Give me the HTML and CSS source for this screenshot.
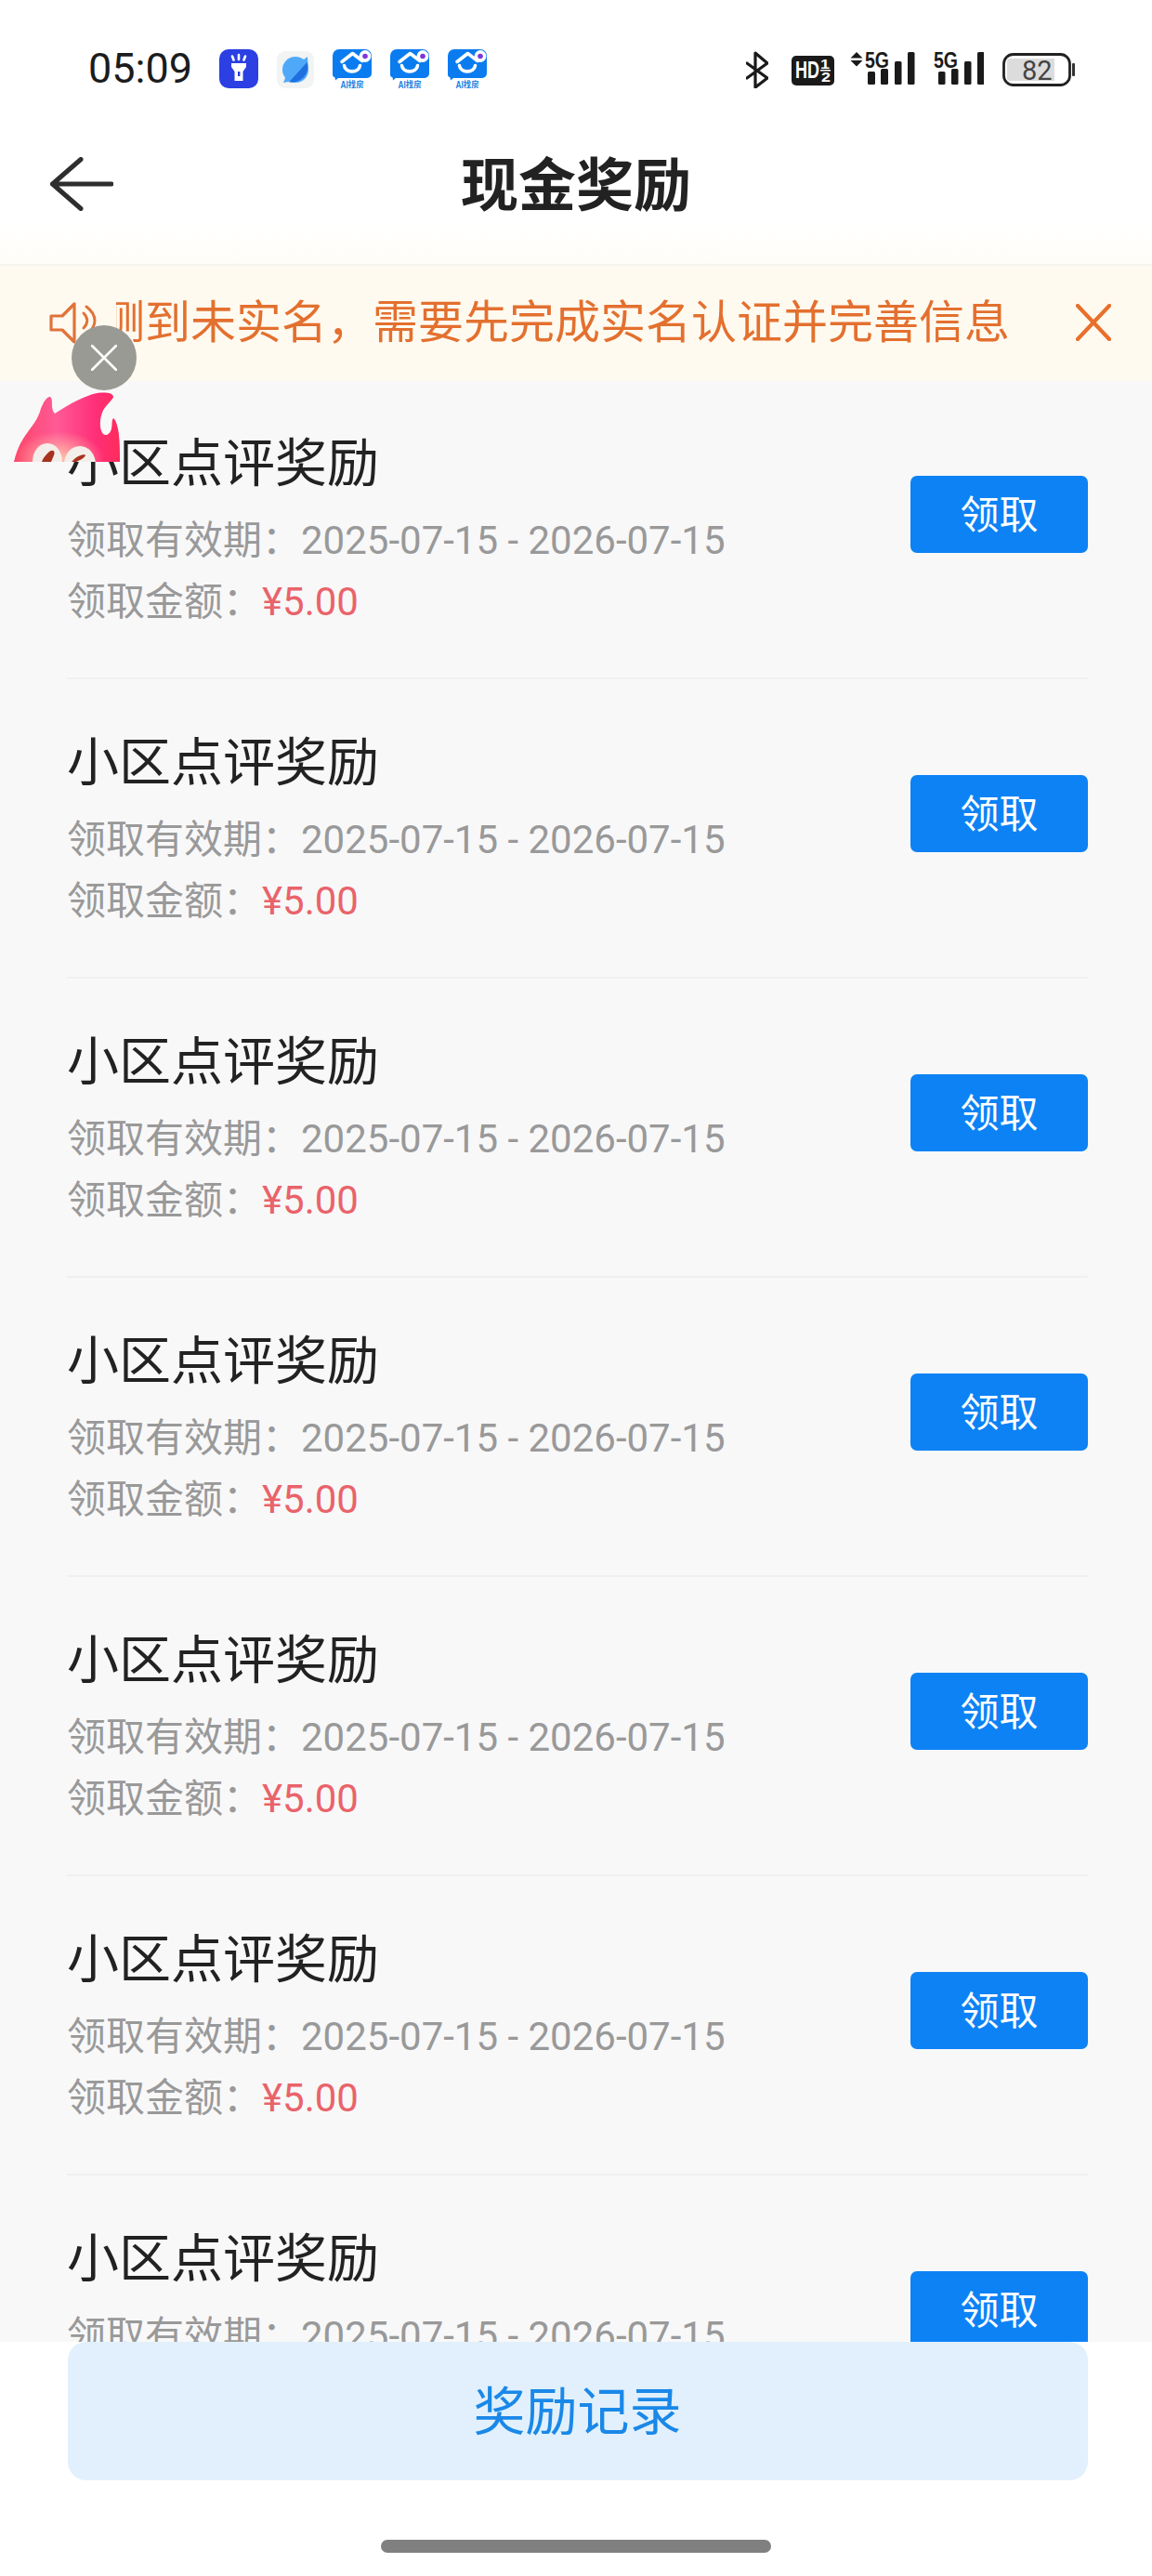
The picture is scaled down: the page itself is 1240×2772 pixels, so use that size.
FILE: index.html
```html
<!DOCTYPE html>
<html lang="zh-CN">
<head>
<meta charset="utf-8">
<title>现金奖励</title>
<link rel="stylesheet" href="styles.css">
</head>
<body>
<svg class="defs" width="0" height="0" aria-hidden="true">
  <symbol id="ai" viewBox="0 0 42 42">
    <path d="M7 0H35A7 7 0 0 1 42 7V26A5 5 0 0 1 37 31H6L3 33.5 2.6 30.5A4 4 0 0 1 0 26V7A7 7 0 0 1 7 0Z" fill="#0a7cf0"/>
    <path d="M10 13.5 21.5 4.5 32 12.5" fill="none" stroke="#fff" stroke-width="3.6" stroke-linecap="round" stroke-linejoin="round"/>
    <path d="M12.5 17.5C13.5 26 28.5 26 29.5 17.5" fill="none" stroke="#fff" stroke-width="3.6" stroke-linecap="round"/>
    <circle cx="35" cy="7.5" r="6.4" fill="#fff"/>
    <circle cx="35" cy="7.5" r="2.8" fill="#7c38d8"/>
    <text class="ai-label" x="21" y="41.5" text-anchor="middle" textLength="25" lengthAdjust="spacingAndGlyphs">AI找房</text>
  </symbol>
</svg>
<div class="page">
  <header class="status">
    <span class="time">05:09</span>
    <div class="apps">
      <svg class="app" viewBox="0 0 42 42">
        <rect width="42" height="42" rx="10" fill="#2b3fe3"/>
        <path d="M13 15H29V19L25.500 24V34H16.500V24L13 19Z" fill="#fff"/>
        <rect x="20" y="24" width="2.400" height="5" fill="#2b3fe3"/>
        <path d="M14 7.500 15.500 11.500M21 6V11M28 7.500 26.500 11.500" stroke="#fff" stroke-width="2.600" stroke-linecap="round"/>
      </svg>
      <svg class="app globe" viewBox="0 0 40 40">
        <rect width="40" height="40" rx="9" fill="#f2f3f3"/>
        <circle cx="20" cy="20" r="14" fill="#4fa9f8"/>
        <path d="M29 9 33 6 33.500 15 25 31 12 33 7 34 9 29Z" fill="#4fa9f8"/>
        <path d="M32.500 12C36 22 28 35 13 33.500Z" fill="#1f6fe0"/>
      </svg>
      <svg class="app"><use href="#ai"/></svg>
      <svg class="app"><use href="#ai"/></svg>
      <svg class="app"><use href="#ai"/></svg>
    </div>
    <div class="indicators">
      <svg class="ind bt" width="24" height="42" viewBox="0 0 24 42">
        <path d="M1 15 23 31 10 41V4L23 15 1 31" fill="none" stroke="#1a1a1a" stroke-width="3.200" stroke-linejoin="round" stroke-linecap="round"/>
      </svg>
      <svg class="ind hd" width="46" height="42" viewBox="0 0 46 42">
        <rect y="7" width="46" height="32" rx="5" fill="#1a1a1a"/>
        <text class="hd-text" x="4" y="31" textLength="26" lengthAdjust="spacingAndGlyphs">HD</text>
        <text class="hd-frac" x="31" y="21" textLength="10" lengthAdjust="spacingAndGlyphs">1</text>
        <rect x="31" y="22" width="11" height="1.500" fill="#fff"/>
        <text class="hd-frac" x="32" y="35" textLength="10" lengthAdjust="spacingAndGlyphs">2</text>
      </svg>
      <svg class="ind" width="70" height="42" viewBox="0 0 70 42">
        <path d="M7 3 13.500 9.500H0.500ZM0.500 12H13.500L7 18.500Z" fill="#1a1a1a"/>
        <text class="net" x="16" y="20" textLength="26" lengthAdjust="spacingAndGlyphs">5G</text>
        <rect x="19" y="24" width="8" height="14" rx="1.500" fill="#1a1a1a"/>
        <rect x="33" y="21" width="8" height="17" rx="1.500" fill="#1a1a1a"/>
        <rect x="48" y="13" width="7.500" height="25" rx="1.500" fill="#1a1a1a"/>
        <rect x="62" y="3" width="7.500" height="35" rx="1.500" fill="#1a1a1a"/>
      </svg>
      <svg class="ind" width="54" height="42" viewBox="0 0 54 42">
        <text class="net" x="0" y="20" textLength="26" lengthAdjust="spacingAndGlyphs">5G</text>
        <rect x="5" y="24" width="7.500" height="14" rx="1.500" fill="#1a1a1a"/>
        <rect x="19" y="21" width="7.500" height="17" rx="1.500" fill="#1a1a1a"/>
        <rect x="33" y="13" width="7.500" height="25" rx="1.500" fill="#1a1a1a"/>
        <rect x="47" y="3" width="7.500" height="35" rx="1.500" fill="#1a1a1a"/>
      </svg>
      <svg class="ind" width="79" height="42" viewBox="0 0 79 42">
        <rect x="1.500" y="5.500" width="71" height="33" rx="10" fill="none" stroke="#222" stroke-width="2.800"/>
        <path d="M8 10H56V34H8A3 3 0 0 1 5 31V13A3 3 0 0 1 8 10Z" fill="#dcdcdc"/>
        <text class="batt" x="21" y="33">82</text>
        <rect x="75" y="15" width="3" height="14" rx="1" fill="#333"/>
      </svg>
    </div>
  </header>

  <nav class="nav">
    <svg class="back" width="68" height="58" viewBox="0 0 68 58">
      <path d="M33 2.500 2.500 29 33 55.500M2.500 29H66" fill="none" stroke="#2e2e2e" stroke-width="5" stroke-linecap="round" stroke-linejoin="round"/>
    </svg>
    <h1 class="nav-title">现金奖励</h1>
  </nav>

  <div class="notice">
    <svg class="speaker" width="52" height="45" viewBox="0 0 52 45">
      <path d="M2 15H14L27 2V43L14 30H2Z" fill="none" stroke="#e0733a" stroke-width="3.200" stroke-linejoin="round"/>
      <path d="M40 5C52 14 52 26 40 35M37 12C42 17 42 23 37 28" fill="none" stroke="#e0733a" stroke-width="3" stroke-linecap="round"/>
    </svg>
    <div class="marquee"><span class="marquee-text">检测到未实名，需要先完成实名认证并完善信息</span></div>
    <svg class="notice-close" width="38" height="40" viewBox="0 0 38 40">
      <path d="M2 2 36 38M36 2 2 38" stroke="#e8702c" stroke-width="4.200" stroke-linecap="square"/>
    </svg>
  </div>

  <main class="list">
    <section class="row">
      <div class="info">
        <h2 class="title">小区点评奖励</h2>
        <p class="meta">领取有效期：2025-07-15 - 2026-07-15</p>
        <p class="meta">领取金额：<span class="money">¥5.00</span></p>
      </div>
      <button class="claim">领取</button>
    </section>
    <section class="row">
      <div class="info">
        <h2 class="title">小区点评奖励</h2>
        <p class="meta">领取有效期：2025-07-15 - 2026-07-15</p>
        <p class="meta">领取金额：<span class="money">¥5.00</span></p>
      </div>
      <button class="claim">领取</button>
    </section>
    <section class="row">
      <div class="info">
        <h2 class="title">小区点评奖励</h2>
        <p class="meta">领取有效期：2025-07-15 - 2026-07-15</p>
        <p class="meta">领取金额：<span class="money">¥5.00</span></p>
      </div>
      <button class="claim">领取</button>
    </section>
    <section class="row">
      <div class="info">
        <h2 class="title">小区点评奖励</h2>
        <p class="meta">领取有效期：2025-07-15 - 2026-07-15</p>
        <p class="meta">领取金额：<span class="money">¥5.00</span></p>
      </div>
      <button class="claim">领取</button>
    </section>
    <section class="row">
      <div class="info">
        <h2 class="title">小区点评奖励</h2>
        <p class="meta">领取有效期：2025-07-15 - 2026-07-15</p>
        <p class="meta">领取金额：<span class="money">¥5.00</span></p>
      </div>
      <button class="claim">领取</button>
    </section>
    <section class="row">
      <div class="info">
        <h2 class="title">小区点评奖励</h2>
        <p class="meta">领取有效期：2025-07-15 - 2026-07-15</p>
        <p class="meta">领取金额：<span class="money">¥5.00</span></p>
      </div>
      <button class="claim">领取</button>
    </section>
    <section class="row">
      <div class="info">
        <h2 class="title">小区点评奖励</h2>
        <p class="meta">领取有效期：2025-07-15 - 2026-07-15</p>
        <p class="meta">领取金额：<span class="money">¥5.00</span></p>
      </div>
      <button class="claim">领取</button>
    </section>
  </main>

  <footer class="footer">
    <button class="records">奖励记录</button>
    <div class="home-bar"></div>
  </footer>

  <div class="float-close">
    <svg width="28" height="28" viewBox="0 0 28 28">
      <path d="M1 1 27 27M27 1 1 27" stroke="#fff" stroke-width="2.600" stroke-linecap="round"/>
    </svg>
  </div>
  <svg class="flame" width="118" height="75" viewBox="0 0 118 75">
    <defs>
      <linearGradient id="flameFill" x1="0" y1="0" x2="1" y2="0">
        <stop offset="0" stop-color="#ff4468"/>
        <stop offset="0.4" stop-color="#ff5a96"/>
        <stop offset="0.75" stop-color="#ff2f78"/>
        <stop offset="1" stop-color="#ff2b58"/>
      </linearGradient>
      <radialGradient id="flameGlow" cx="0.5" cy="0.5" r="0.5">
        <stop offset="0" stop-color="#ffc4a8" stop-opacity="1"/>
        <stop offset="1" stop-color="#ffc4a8" stop-opacity="0"/>
      </radialGradient>
      <clipPath id="flameClip">
        <path d="M1 75C3 66 6 58 11 50 17 40 25 33 29 21 31 14 35 6 39 5 42 4 42 10 42 14 42 18 43 21 45 23 53 18 60 13 69 9 78 5 86 1 95 0.500 101 0 108 1 108 5 108 8 99 14 96 22 93 30 93 40 97 45 101 48 105 44 106 39 107 35 106 30 108 28 111 30 113 38 114 46 115 55 115 65 115 75Z"/>
      </clipPath>
    </defs>
    <g clip-path="url(#flameClip)">
      <rect width="118" height="75" fill="url(#flameFill)"/>
      <ellipse cx="50" cy="72" rx="48" ry="30" fill="url(#flameGlow)"/>
    </g>
    <ellipse cx="37" cy="75" rx="16" ry="20" fill="#f4eeea"/>
    <ellipse cx="72" cy="78" rx="17" ry="20" fill="#f4eeea"/>
    <path d="M38 65C42 61 46 63 44 68L41 75H31C32 71 35 68 38 65Z" fill="#a83220"/>
    <path d="M66 72C70 68 78 66 78 68 77 71 72 73 68 75H63Z" fill="#a83220"/>
  </svg>
</div>
</body>
</html>
```

FILE: styles.css
```css
* {
  box-sizing: border-box;
}

html,
body {
  margin: 0;
  padding: 0;
}

body {
  background: #fff;
  font-family: Roboto, "Noto Sans CJK SC", sans-serif;
}

.defs {
  position: absolute;
}

.page {
  position: relative;
  display: flex;
  flex-direction: column;
  width: 1240px;
  height: 2772px;
  overflow: hidden;
  background: #fff;
}

/* Status bar */
.status {
  display: flex;
  align-items: center;
  height: 128px;
  padding: 53px 82px 33px 95px;
  flex: none;
}

.time {
  width: 110px;
  margin-right: 31px;
  font-size: 45px;
  line-height: 42px;
  color: #1c1c1c;
  white-space: nowrap;
}

.apps {
  display: flex;
  gap: 20px;
}

.app {
  width: 42px;
  height: 42px;
  display: block;
}

.app.globe {
  width: 40px;
  height: 40px;
  margin-top: 2px;
}

.ai-label {
  font: 700 10px "Liberation Sans", "Noto Sans CJK SC", sans-serif;
  fill: #1a7fe0;
}

.indicators {
  display: flex;
  gap: 20px;
  margin-left: auto;
}

.ind {
  display: block;
}

.ind.bt {
  margin-right: 5px;
}

.ind.hd {
  margin-right: -3px;
}

.hd-text {
  font: 700 26px "Liberation Sans", sans-serif;
  fill: #fff;
}

.hd-frac {
  font: 700 14px "Liberation Sans", sans-serif;
  fill: #fff;
}

.net {
  font: 700 23px "Liberation Sans", sans-serif;
  fill: #1a1a1a;
}

.batt {
  font: 400 29px Roboto, sans-serif;
  fill: #444;
}

/* Nav */
.nav {
  position: relative;
  display: flex;
  align-items: center;
  justify-content: center;
  height: 156px;
  padding-bottom: 10px;
  flex: none;
  background: linear-gradient(#fff 70%, #fffdf8);
}

.back {
  position: absolute;
  left: 54px;
  top: 41px;
}

.nav-title {
  margin: 0;
  font-size: 62px;
  line-height: 80px;
  font-weight: 700;
  color: #222;
}

/* Notice */
.notice {
  display: flex;
  align-items: center;
  height: 126px;
  padding: 0 44px 0 53px;
  flex: none;
  background: #fffaf0;
  border-top: 2px solid #f5f4ec;
}

.speaker {
  flex: none;
  margin-top: -2px;
}

.marquee {
  flex: 1;
  margin: 0 60px 0 20px;
  overflow: hidden;
  white-space: nowrap;
}

.marquee-text {
  display: block;
  margin-left: -67px;
  font-size: 49px;
  line-height: 70px;
  color: #e3702f;
}

.notice-close {
  flex: none;
  margin-top: -2px;
}

/* List */
.list {
  flex: 1;
  min-height: 0;
  overflow: hidden;
  padding: 0 69px 0 72px;
  background: #f8f8f9;
}

.row {
  display: flex;
  justify-content: space-between;
  align-items: flex-start;
  height: 322px;
  padding-top: 50px;
  border-bottom: 2px solid #f0f0f0;
}

.row:first-child {
  height: 321px;
  padding-top: 49px;
}

.title {
  margin: 0 0 10px;
  font-size: 56px;
  line-height: 80px;
  font-weight: 400;
  color: #222;
}

.meta {
  margin: 0;
  font-size: 42px;
  line-height: 66px;
  color: #999;
  white-space: nowrap;
}

.money {
  color: #e9636a;
}

.claim {
  width: 191px;
  height: 83px;
  margin-top: 53px;
  padding: 0 0 6px;
  border: 0;
  border-radius: 7px;
  background: #0d82f5;
  color: #fff;
  font: 400 42px Roboto, "Noto Sans CJK SC", sans-serif;
}

/* Footer */
.footer {
  display: flex;
  flex-direction: column;
  align-items: center;
  height: 252px;
  padding-left: 3px;
  flex: none;
  background: #fff;
}

.records {
  width: 1098px;
  height: 149px;
  padding: 0 0 8px;
  border: 0;
  border-radius: 20px;
  background: #e1f0fc;
  color: #1a88e8;
  font: 400 56px Roboto, "Noto Sans CJK SC", sans-serif;
}

.home-bar {
  width: 420px;
  height: 14px;
  margin: 64px 3px 0 0;
  border-radius: 7px;
  background: #808080;
}

/* Floating widget */
.float-close {
  position: absolute;
  left: 77px;
  top: 350px;
  display: flex;
  align-items: center;
  justify-content: center;
  width: 70px;
  height: 70px;
  border-radius: 50%;
  background: #9a9a94;
}

.flame {
  position: absolute;
  left: 14px;
  top: 422px;
}
```
